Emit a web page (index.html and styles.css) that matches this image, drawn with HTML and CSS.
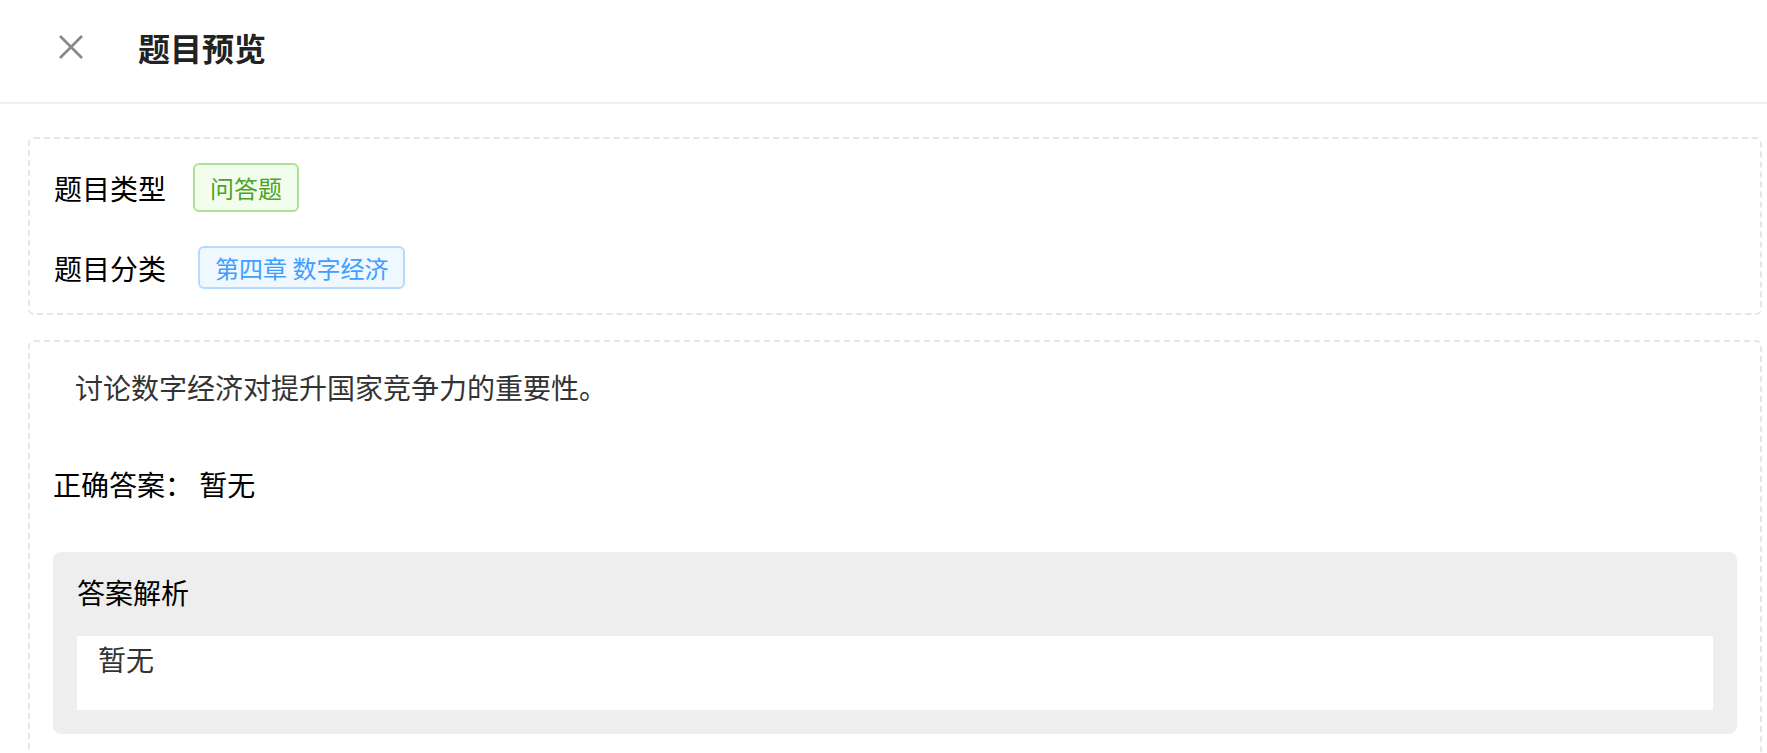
FILE: index.html
```html
<!DOCTYPE html>
<html lang="zh-CN">
<head>
<meta charset="utf-8">
<title>题目预览</title>
<link rel="stylesheet" href="styles.css">
</head>
<body>
<header class="header">
  <button class="close" aria-label="关闭">
    <svg width="26" height="26" viewBox="0 0 26 26"><path d="M2 2 L24 24 M24 2 L2 24" stroke="#888888" stroke-width="2.6" fill="none"/></svg>
  </button>
  <h1 class="title">题目预览</h1>
</header>
<main class="main">
  <section class="card card--meta">
    <div class="meta-row">
      <span class="meta-label">题目类型</span>
      <span class="tag tag--success">问答题</span>
    </div>
    <div class="meta-row">
      <span class="meta-label">题目分类</span>
      <span class="tag tag--primary">第四章 数字经济</span>
    </div>
  </section>
  <section class="card card--body">
    <p class="question">讨论数字经济对提升国家竞争力的重要性。</p>
    <p class="answer">正确答案：&nbsp;暂无</p>
    <div class="analysis">
      <div class="analysis-title">答案解析</div>
      <div class="analysis-content">暂无</div>
    </div>
  </section>
</main>
</body>
</html>
```
FILE: styles.css
```css
* { box-sizing: border-box; }
html, body { margin: 0; padding: 0; background: #fff; }
body {
  font-family: "Noto Sans CJK SC", "Noto Sans", sans-serif;
  color: #000;
}
.header {
  height: 104px;
  border-bottom: 2px solid #eeeeee;
  display: flex;
  align-items: center;
  padding-left: 58px;
  padding-bottom: 8px;
}
.close {
  width: 26px; height: 26px; padding: 0; border: 0; background: none;
  display: flex; align-items: center; justify-content: center;
}
.title {
  margin: 0 0 0 54px;
  font-size: 32px;
  font-weight: 700;
  color: #222;
  line-height: 40px;
}
.main {
  padding: 33px 5px 0 28px;
  display: flex;
  flex-direction: column;
  gap: 25px;
}
.card {
  border: 2px dashed #e6e6e6;
  border-radius: 6px;
}
.card--meta {
  padding: 24px 24px 24px 24px;
  display: flex;
  flex-direction: column;
  gap: 34px;
}
.meta-row {
  display: flex;
  align-items: center;
}
.meta-label {
  font-size: 28px;
  line-height: 36px;
  width: 139px;
  color: #000;
}
.tag {
  display: inline-flex;
  align-items: center;
  border: 2px solid;
  border-radius: 6px;
  font-size: 24px;
  padding: 0 15px;
}
.tag--success {
  height: 49px;
  background: #f3fdee;
  border-color: #b0e295;
  color: #4ca426;
}
.tag--primary {
  height: 43px;
  margin-left: 5px;
  background: #eff7ff;
  border-color: #b6dbff;
  color: #409eff;
}
.card--body {
  padding: 25px 23px 24px 23px;
}
.question {
  margin: 0;
  padding-left: 22px;
  font-size: 28px;
  line-height: 40px;
  color: #333;
}
.answer {
  margin: 57px 0 0 0;
  font-size: 28px;
  line-height: 40px;
  color: #000;
}
.analysis {
  margin-top: 48px;
  background: #eeeeee;
  border-radius: 8px;
  padding: 20px 24px 24px 24px;
}
.analysis-title {
  font-size: 28px;
  line-height: 40px;
  color: #000;
}
.analysis-content {
  margin-top: 24px;
  background: #fff;
  min-height: 74px;
  padding: 3px 21px;
  font-size: 28px;
  line-height: 40px;
  color: #333;
}
```
